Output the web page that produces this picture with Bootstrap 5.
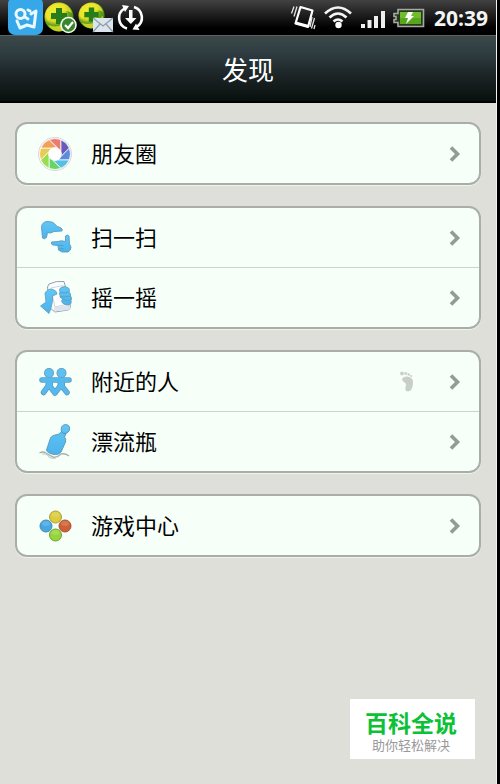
<!DOCTYPE html>
<html lang="zh-CN">
<head>
<meta charset="utf-8">
<meta name="viewport" content="width=device-width, initial-scale=1">
<title>发现</title>
<link href="https://cdn.jsdelivr.net/npm/bootstrap@5.3.0/dist/css/bootstrap.min.css" rel="stylesheet">
<style>
body{background:#000;font-family:"Noto Sans","Noto Sans CJK SC",sans-serif}
.screen{background:#dedfd8;margin-right:3px;border-right:1px solid #f2f2ee}
.status-bar{height:35px;background:linear-gradient(#424242,#1c1c1c 45%,#000 80%);padding:0 8px 0 8px}
.status-bar svg,.entry svg{display:block;flex:none}
.clock{font:700 21px/34px "Open Sans","Noto Sans",sans-serif;color:#f4f4f4}
.title-bar{height:68px;background:linear-gradient(#3c4848,#2e3d42 25%,#1b2325 60%,#08100f 96%,#000 98%);border-top:1px solid #596465}
.title-bar h1{font-size:26px;line-height:68px;color:#fff}
.panels{padding:19px 15px 0;gap:21px}
.panel-list{border:2px solid #a9aeab;border-radius:12px;background:#f7fff9;box-shadow:0 1px 0 #f1f2ed}
.entry{height:59px;font-size:22px;color:#000;text-decoration:none;padding:0 18px 0 13px}
.entry + .entry{border-top:1px solid #cdd2ce;height:60px}
.entry-text{margin-left:11px;line-height:30px;padding-bottom:2px}
.foot{margin-right:35px}
.brand{background:#fff;width:125px;height:60px;margin:auto 21px 25px auto;padding:10px 3px 0 0}
.brand-name{font-size:23px;line-height:28px;font-weight:700;color:#0bc136}
.brand-sub{font-size:13px;line-height:16px;color:#999}
</style>
<script src="https://cdn.jsdelivr.net/npm/bootstrap@5.3.0/dist/js/bootstrap.bundle.min.js" defer></script>
</head>
<body>
<svg width="0" height="0" class="position-absolute" aria-hidden="true">
<defs>
<linearGradient id="sky" x1="0" y1="0" x2="0" y2="1"><stop offset="0" stop-color="#62c6f5"/><stop offset="1" stop-color="#4cb2ea"/></linearGradient>
<radialGradient id="ball" cx=".35" cy=".3" r=".8"><stop offset="0" stop-color="#f2ef3a"/><stop offset=".45" stop-color="#d9d621"/><stop offset=".6" stop-color="#6aa51c"/><stop offset="1" stop-color="#2e7a16"/></radialGradient>
<symbol id="chev" viewBox="0 0 12 18"><path d="M2 2.500 8.500 9 2 15.500" fill="none" stroke="#959a97" stroke-width="3.600"/></symbol>
<symbol id="orb" viewBox="0 0 30 30"><circle cx="15" cy="15" r="14.500" fill="url(#ball)"/><path d="M3 8Q11-1 23 3Q27 7 28 11Q17 4 4 19Q1 14 3 8Z" fill="#f0e92d" opacity=".75"/><path d="M4 23Q17 28 28 15Q27 28 15 29.500Q8 29 4 23Z" fill="#e4df29" opacity=".8"/><path d="M12 6h6v5h5v6h-5v5h-6v-5H7v-6h5z" fill="#267e1b"/></symbol>
<path id="blade" d="M-5.900-14.300A15.500 15.500 0 0 1 5.900-14.300L6-2.500A6.500 6.500 0 0 0 2.500-6Z"/>
<g id="pair"><path d="M12 23H39M19 23v5L13.500 35.500M19 28L25 36 31 28M31 28L37 35.500M31 28v-5" fill="none" stroke-linecap="round" stroke-linejoin="round"/></g>
</defs>
</svg>
<div class="screen d-flex flex-column min-vh-100">
  <div class="status-bar d-flex align-items-center justify-content-between">
    <svg width="138" height="35" viewBox="8 0 138 35" role="img" aria-label="通知">
      <rect x="8" y="-3" width="35" height="38" rx="7" fill="#36a8ea"/>
      <circle cx="20.500" cy="14" r="4.500" fill="none" stroke="#eaf8ff" stroke-width="3"/>
      <path d="M25 17l3 2M31 14l5-3-2 16-7-2-7 3-3-7M30 11l-2-1" fill="none" stroke="#eaf8ff" stroke-width="3" stroke-linejoin="round" stroke-linecap="round"/>
      <use href="#orb" x="44" y="2" width="30" height="30"/>
      <circle cx="68.500" cy="25" r="7.500" fill="#39852e" stroke="#f4f8f0" stroke-width="1.600"/>
      <path d="M65 25l3 3 5-6" fill="none" stroke="#fff" stroke-width="2.200"/>
      <use href="#orb" x="78" y="2" width="27" height="27"/>
      <rect x="93" y="18" width="20" height="14" fill="#dce5ec"/>
      <path d="M93 18l10 8 10-8M93 32l7-8M113 32l-7-8" fill="none" stroke="#8b9cab" stroke-width="1.200"/>
      <path d="M127 28.500A11 11 0 0 1 124.500 8.500M134 7A11 11 0 0 1 136.500 27" fill="none" stroke="#fff" stroke-width="2.600"/>
      <path d="M122 5l7 1-4 6zM139.500 30l-7-.500 3.500-6zM129 10h3.500v8h4l-5.700 6-5.800-6h4z" fill="#fff"/>
    </svg>
    <div class="d-flex align-items-center">
      <svg width="146" height="35" viewBox="288 0 146 35" role="img" aria-label="振动、无线网络、信号、充电">
        <path d="M300.500 7L312.500 10.500 308 27 295.500 23.500Z" fill="none" stroke="#fff" stroke-width="2.200" stroke-linejoin="round"/>
        <path d="M296 21.500l13 3.500-.800 2.500-13-3.500z" fill="#fff"/>
        <path d="M297 6.500l-3 10M294 6.500l-2.500 7M314.500 18l-3 10.500M315 25l-1 4M312 17l-2 10" fill="none" stroke="#e5e5e5" stroke-width="1.300"/>
        <path d="M325 13.500Q338 1.500 351 13.500M329.500 17.500Q338 9.500 346.500 17.500M333.500 21.500Q338 17.500 342.500 21.500" fill="none" stroke="#f4f4f4" stroke-width="2.600"/>
        <circle cx="338.500" cy="25" r="3.200" fill="#fff"/>
        <path d="M361 24h4v4h-4zM367.500 20h4v8h-4zM374 16h4v12h-4zM381 11h4v17h-4z" fill="#eee"/>
        <path d="M398 9.500h25.500v17H398v-4h-4v-3h2v-3h-2v-3h4z" fill="#263b1a" stroke="#a8a8a8" stroke-width="1.600"/>
        <path d="M400 12h21v12h-21z" fill="#58a619"/><path d="M400 12h21v6h-21z" fill="#70bb2e"/>
        <path d="M408 12h5l-2 4h3l-8 8 2-6h-3z" fill="#fff"/>
      </svg>
      <time class="clock">20:39</time>
    </div>
  </div>
  <header class="title-bar text-center"><h1 class="m-0 fw-normal">发现</h1></header>
  <main class="panels d-flex flex-column">
    <nav class="panel-list">
      <a class="entry d-flex align-items-center" href="#moments">
        <svg width="50" height="50" viewBox="0 -2 50 50" aria-hidden="true">
          <circle cx="25" cy="23" r="16.500" fill="#fff" stroke="#dfd3e0"/>
          <g transform="translate(25 23)" stroke="#fff" stroke-width=".7">
            <use href="#blade" fill="#ec7b70"/>
            <use href="#blade" fill="#6a59b8" transform="rotate(45)"/>
            <use href="#blade" fill="#5b8ddc" transform="rotate(90)"/>
            <use href="#blade" fill="#58bfe0" transform="rotate(135)"/>
            <use href="#blade" fill="#66d765" transform="rotate(180)"/>
            <use href="#blade" fill="#9bdc50" transform="rotate(225)"/>
            <use href="#blade" fill="#e8cb52" transform="rotate(270)"/>
            <use href="#blade" fill="#efa15c" transform="rotate(315)"/>
          </g>
          <circle cx="25" cy="23" r="6" fill="#fff"/>
        </svg>
        <span class="entry-text me-auto">朋友圈</span>
        <svg width="12" height="18" aria-hidden="true"><use href="#chev"/></svg>
      </a>
    </nav>
    <nav class="panel-list">
      <a class="entry d-flex align-items-center" href="#scan">
        <svg width="50" height="50" viewBox="0 0 50 50" aria-hidden="true">
          <g fill="url(#sky)" stroke="#5a9cbd" stroke-width=".9" stroke-linejoin="round">
            <path d="M12.500 25L11.500 14Q12 9 17 8.500L22 9Q24.500 10 26.500 13L31 15Q33 16 32 18L24 18.500Q20 21 17.500 19.500L16.500 24.500Q14.500 26.500 12.500 25Z"/>
            <path d="M21.500 29Q20.500 31 23 32L28 32.500L28.500 37L32 39L38 39Q41 37.500 41 34L39.500 31L39 23Q37 21 35.500 23L35.500 28.500Q31 27 28 28.500Z"/>
            <path d="M28 32.500h5.500M29 35.800h5" fill="none"/>
          </g>
        </svg>
        <span class="entry-text me-auto">扫一扫</span>
        <svg width="12" height="18" aria-hidden="true"><use href="#chev"/></svg>
      </a>
      <a class="entry d-flex align-items-center" href="#shake">
        <svg width="50" height="50" viewBox="0 0 50 50" aria-hidden="true">
          <path d="M17.500 14L19 11Q26 7.500 34 8.500L40.500 33Q41 36 38 37L25 39L20 35Z" fill="#f8fcfe" stroke="#999faa" stroke-width="1"/>
          <path d="M21 15L33 12.500L37.500 31L25 34Z" fill="#fff" stroke="#c2cdd5" stroke-width=".8"/>
          <path d="M24 34.500L40 31.500L40.500 35L38 37L24 38.500Z" fill="#dce5ef"/>
          <g fill="url(#sky)" stroke="#5a9cbd" stroke-width=".8" stroke-linejoin="round">
            <path d="M10.500 33L16 29L15 20Q18 15 23 16.500Q27 18 27 21L22.500 23L22.500 28Q21.500 35 19 40.500Z"/>
            <path d="M31 14.500Q36 12 39 15.500Q40 18 39 19Q41 20 40.500 23Q42.500 25 41 27.500Q42 31 38.500 32Q34 32 32 29.500Q31 27 33 26Q29 25 30 22Q28.500 21 30 19Q28.500 16 31 14.500Z"/>
            <path d="M30 19.500q5 1 9-.5M30.500 23.500q5 1 10-.5M33 26.500q5 2 8 0" fill="none"/>
          </g>
        </svg>
        <span class="entry-text me-auto">摇一摇</span>
        <svg width="12" height="18" aria-hidden="true"><use href="#chev"/></svg>
      </a>
    </nav>
    <nav class="panel-list">
      <a class="entry d-flex align-items-center" href="#nearby">
        <svg width="50" height="50" viewBox="0 0 50 50" aria-hidden="true">
          <g fill="#5e9cbd" stroke="#5e9cbd" stroke-width="5.500"><use href="#pair"/></g>
          <path d="M15.500 21h7.500v8h-7.500zM27.500 21h7.500v8h-7.500z" fill="#5e9cbd"/>
          <circle cx="19" cy="16" r="5" fill="#5e9cbd"/><circle cx="31.500" cy="16" r="5" fill="#5e9cbd"/>
          <g stroke="#53b9ee" stroke-width="4"><use href="#pair"/></g>
          <path d="M16.300 21h6v8h-6zM28.200 21h6v8h-6z" fill="#53b9ee"/>
          <circle cx="19" cy="16" r="4.200" fill="#5cc0f2"/><circle cx="31.500" cy="16" r="4.200" fill="#5cc0f2"/>
        </svg>
        <span class="entry-text me-auto">附近的人</span>
        <svg class="foot" width="15" height="22" viewBox="0 0 15 22" aria-hidden="true"><g fill="#c9cecb"><circle cx="3" cy="2.500" r="1.900"/><circle cx="6.700" cy="2.500" r="1.400"/><circle cx="9.700" cy="3.500" r="1.300"/><circle cx="12.200" cy="5" r="1.100"/><path d="M3 8Q4 5.500 8 5.500Q14 6 14 11Q14 20 9 20.500Q5.500 20 6.500 16Q8 13 5 11Q3 10 3 8Z"/></g></svg>
        <svg width="12" height="18" aria-hidden="true"><use href="#chev"/></svg>
      </a>
      <a class="entry d-flex align-items-center" href="#bottle">
        <svg width="50" height="50" viewBox="0 0 50 50" aria-hidden="true">
          <path d="M9.500 36Q13 34 16 36L23 40Q27 41 31 37Q35 36 39 39" fill="none" stroke="#aab1ae" stroke-width="1.400"/>
          <path d="M16.500 33L20.500 21Q22 18 28 17.500L31.500 15Q30 8 35.500 7.500Q40.500 8 39.500 13Q38.500 15.500 36 16.500L34.500 20Q36.500 22 35.500 25L31 35Q29 38 24 37.500Q17 36 16.500 33Z" fill="url(#sky)" stroke="#5e9cbd" stroke-width="1"/>
          <path d="M31.500 14.500Q33 17 36 16.500" fill="none" stroke="#4a91bb"/>
          <path d="M12 37Q17 36 19 40Q22 42 26 41" fill="none" stroke="#c7cfcb" stroke-width="1.200"/>
        </svg>
        <span class="entry-text me-auto">漂流瓶</span>
        <svg width="12" height="18" aria-hidden="true"><use href="#chev"/></svg>
      </a>
    </nav>
    <nav class="panel-list">
      <a class="entry d-flex align-items-center" href="#games">
        <svg width="50" height="50" viewBox="0 0 50 50" aria-hidden="true">
          <circle cx="25.500" cy="16" r="6" fill="#dccb3a" stroke="#aaa13a"/>
          <circle cx="16" cy="25" r="6" fill="#44a8e2" stroke="#4788b1"/>
          <circle cx="35" cy="25" r="6" fill="#ce6034" stroke="#9d5436"/>
          <circle cx="25.500" cy="34" r="6" fill="#95d538" stroke="#719f3b"/>
          <g fill="#fff" opacity=".15"><ellipse cx="25.500" cy="13.500" rx="4" ry="2.500"/><ellipse cx="16" cy="22.500" rx="4" ry="2.500"/><ellipse cx="35" cy="22.500" rx="4" ry="2.500"/><ellipse cx="25.500" cy="31.500" rx="4" ry="2.500"/></g>
        </svg>
        <span class="entry-text me-auto">游戏中心</span>
        <svg width="12" height="18" aria-hidden="true"><use href="#chev"/></svg>
      </a>
    </nav>
  </main>
  <footer class="brand text-center">
    <div class="brand-name">百科全说</div>
    <div class="brand-sub">助你轻松解决</div>
  </footer>
</div>
</body>
</html>
